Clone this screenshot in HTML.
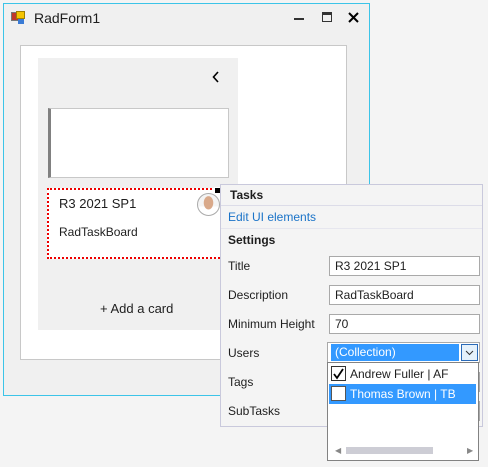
<!DOCTYPE html>
<html><head><style>
*{margin:0;padding:0;box-sizing:border-box}
body{width:488px;height:467px;background:#f4f4f4;font-family:"Liberation Sans",sans-serif;font-size:12px;color:#1e1e1e;position:relative;overflow:hidden}
.a{position:absolute}
.tb{position:absolute;background:#fff;border:1px solid #a9a9a9;height:20px;left:329px;width:151px;padding:2px 5px;font-size:12px}
.lbl{position:absolute;left:228px;font-size:12px}
</style></head><body>
<div class="a" style="left:3px;top:3px;width:367px;height:393px;background:#f0f0f0;border:1px solid #3cc4e8"></div>
<div class="a" style="left:11px;top:12px;width:8px;height:9px;background:#c0392b;border:1px solid #777"></div>
<div class="a" style="left:16px;top:11px;width:9px;height:8px;background:#f5c400;border:1px solid #a08000"></div>
<div class="a" style="left:18px;top:19px;width:6px;height:5px;background:#3a7bd5"></div>
<div class="a" style="left:34px;top:10px;font-size:14px">RadForm1</div>
<div class="a" style="left:294px;top:18px;width:10px;height:2px;background:#333"></div>
<div class="a" style="left:322px;top:12px;width:10px;height:10px;border:1px solid #333;border-top:3px solid #333"></div>
<svg class="a" style="left:348px;top:12px" width="11" height="11"><path d="M1 1L10 10M10 1L1 10" stroke="#000" stroke-width="2"/></svg>
<div class="a" style="left:20px;top:45px;width:327px;height:315px;background:#fff;border:1px solid #c8c8c8"></div>
<div class="a" style="left:38px;top:58px;width:200px;height:272px;background:#f0f0f0"></div>
<svg class="a" style="left:212px;top:71px" width="8" height="12"><path d="M6 1L1.5 6L6 11" stroke="#000" stroke-width="1.6" fill="none"/></svg>
<div class="a" style="left:48px;top:108px;width:181px;height:70px;background:#fff;border:1px solid #c8c8c8;border-left:3px solid #808080"></div>
<div class="a" style="left:47px;top:188px;width:180px;height:71px;background:#fff;border:2px dotted #e00"></div>
<div class="a" style="left:59px;top:196px;font-size:13px">R3 2021 SP1</div>
<div class="a" style="left:59px;top:225px;font-size:12px">RadTaskBoard</div>
<div class="a" style="left:197px;top:193px;width:23px;height:23px;border-radius:50%;background:radial-gradient(ellipse 5px 7px at 50% 42%,#d9a98a 90%,transparent 100%),linear-gradient(#f4f4f4 60%,#fff 60%);border:1px solid #aaa"></div>
<div class="a" style="left:214px;top:187px;width:7px;height:7px;background:#000;border:1px solid #fff"></div>
<div class="a" style="left:100px;top:301px;font-size:13px">+ Add a card</div>

<div class="a" style="left:220px;top:184px;width:263px;height:243px;background:#f4f4f4;border:1px solid #c9c9dc"></div>
<div class="a" style="left:230px;top:188px;font-weight:bold;font-size:12px">Tasks</div>
<div class="a" style="left:221px;top:205px;width:261px;height:1px;background:#dcdce8"></div>
<div class="a" style="left:228px;top:210px;color:#1a73c8">Edit UI elements</div>
<div class="a" style="left:221px;top:228px;width:261px;height:1px;background:#e6e6ee"></div>
<div class="a" style="left:228px;top:233px;font-weight:bold">Settings</div>
<div class="lbl" style="top:259px">Title</div>
<div class="lbl" style="top:288px">Description</div>
<div class="lbl" style="top:317px">Minimum Height</div>
<div class="lbl" style="top:346px">Users</div>
<div class="lbl" style="top:375px">Tags</div>
<div class="lbl" style="top:404px">SubTasks</div>
<div class="tb" style="top:256px">R3 2021 SP1</div>
<div class="tb" style="top:285px">RadTaskBoard</div>
<div class="tb" style="top:314px">70</div>
<div class="tb" style="top:372px"></div>
<div class="tb" style="top:401px"></div>
<div class="a" style="left:327px;top:342px;width:153px;height:21px;background:#fff;border:1px solid #a9a9a9"></div>
<div class="a" style="left:331px;top:344px;width:128px;height:17px;background:#3399ff;color:#fff;padding:1px 4px">(Collection)</div>
<div class="a" style="left:461px;top:344px;width:17px;height:17px;background:#e5f1fb;border:1px solid #2a6ab8"></div>
<svg class="a" style="left:465px;top:350px" width="9" height="6"><path d="M1 1L4.5 4.5L8 1" stroke="#333" stroke-width="1" fill="none"/></svg>
<div class="a" style="left:327px;top:362px;width:152px;height:99px;background:#fff;border:1px solid #828282"></div>
<div class="a" style="left:331px;top:366px;width:15px;height:15px;border:1px solid #333"></div>
<svg class="a" style="left:332px;top:367px" width="13" height="13"><path d="M2 7L5 11L11 2" stroke="#000" stroke-width="1.8" fill="none"/></svg>
<div class="a" style="left:350px;top:367px">Andrew Fuller | AF</div>
<div class="a" style="left:329px;top:384px;width:147px;height:20px;background:#3399ff"></div>
<div class="a" style="left:331px;top:386px;width:15px;height:15px;border:1px solid #555;background:#fff"></div>
<div class="a" style="left:350px;top:387px;color:#fff">Thomas Brown | TB</div>
<div class="a" style="left:335px;top:446px;font-size:8px;color:#888">◀</div>
<div class="a" style="left:346px;top:447px;width:87px;height:7px;background:#cdcdd5"></div>
<div class="a" style="left:467px;top:446px;font-size:8px;color:#888">▶</div>
</body></html>
